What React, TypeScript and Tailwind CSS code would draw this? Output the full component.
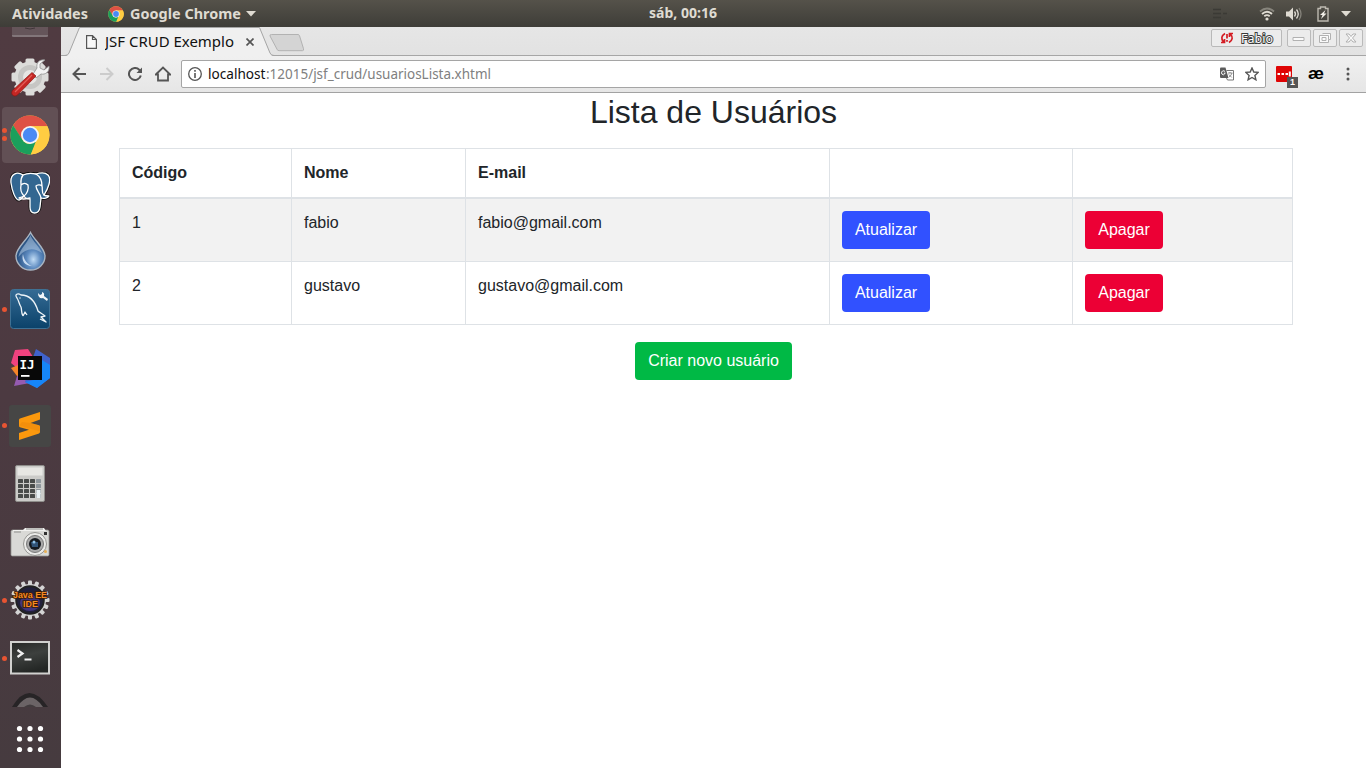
import React from "react";

const users = [
  { id: 1, name: "fabio", email: "fabio@gmail.com" },
  { id: 2, name: "gustavo", email: "gustavo@gmail.com" },
];

function ChromeIcon({ className }: { className: string }) {
  return (
    <svg viewBox="0 0 40 40" className={className}>
      <circle cx="20" cy="20" r="19.5" fill="#ffcd42" />
      <path d="M3.1 10.3A19.5 19.5 0 0 1 37.4 11.2H20L11.5 24Z" fill="#de5145" />
      <path d="M3.1 10.3L12.2 24.5Q15 29 20 29L26 26 20.8 39.5A19.5 19.5 0 0 1 3.1 10.3Z" fill="#1a9f5c" />
      <path d="M37.4 11.2H20v5l8.2 8.4L20.8 39.5A19.5 19.5 0 0 0 37.4 11.2Z" fill="#ffcd42" />
      <circle cx="20" cy="20" r="9" fill="#f4f4f4" />
      <circle cx="20" cy="20" r="7.2" fill="#4a8af4" />
    </svg>
  );
}

const gearTeeth = [0, 45, 90, 135, 180, 225, 270, 315];

function ToolsIcon() {
  return (
    <svg viewBox="0 0 40 40" className="size-10">
      <g fill="#dcdcda">
        {gearTeeth.map((a) => (
          <rect key={a} x="15.500" y="1.500" width="9" height="9" rx="1.5" transform={`rotate(${a} 20 20)`} />
        ))}
        <circle cx="20" cy="20" r="15.5" />
      </g>
      <circle cx="20" cy="20" r="12" fill="#c6c6c4" />
      <circle cx="20" cy="20" r="7" fill="#e6e6e4" />
      <path d="M23 17l4-6c-1-5 2-9 8-8l-5 4v4l4 2 5-4c1 6-4 9-8 8l-5 4z" fill="#f3f3f3" stroke="#8f8f8f" strokeWidth=".8" />
      <path d="M22 15.5l4 3.5L7.500 38C4 41 0 37 2.500 33.500Z" fill="#c52724" stroke="#8c1714" strokeWidth=".7" />
      <path d="M22 18L5 35" stroke="#e35d58" strokeWidth="1.2" />
    </svg>
  );
}

function PostgresIcon() {
  return (
    <svg viewBox="0 0 40 42" className="h-[42px] w-10" stroke="#fff" strokeLinejoin="round" strokeLinecap="round">
      <path d="M13 3C7-1 0 2 1 11c1 7 4 17 8 17 2 0 4-3 5-4 1 2 4 3 6 3v8c0 8 9 8 10 0l1-9c3 1 7 0 8-2-2 0-4 0-5-1 4-6 8-16 4-20-3-3-9-2-12-1-4-1-9-1-13 1Z" fill="#336791" stroke="#111" strokeWidth="3" />
      <path d="M13 3C7-1 0 2 1 11c1 7 4 17 8 17 2 0 4-3 5-4 1 2 4 3 6 3v8c0 8 9 8 10 0l1-9c3 1 7 0 8-2-2 0-4 0-5-1 4-6 8-16 4-20-3-3-9-2-12-1-4-1-9-1-13 1Z" fill="#336791" strokeWidth="1.3" />
      <path d="M13 3c-3 4-2 7-2 10-1 5 0 8 3 11 3-2 5-7 4-11-2-2-5-2-7 0M26 2c5 3 6 8 6 12-2-2-5-1-6 0 0 4 4 7 5 12M32 14c1 3-1 6 2 9M14 24c-2 2-4 1-5 2 3 2 7 1 11 0" fill="none" strokeWidth="1.3" />
    </svg>
  );
}

function DropIcon() {
  return (
    <svg viewBox="0 0 40 40" className="size-10">
      <defs>
        <radialGradient id="drop" cx=".6" cy=".72" r=".6">
          <stop offset="0" stopColor="#c1dcf5" />
          <stop offset=".4" stopColor="#5e8bc0" />
          <stop offset="1" stopColor="#1f4778" />
        </radialGradient>
      </defs>
      <path d="M20.500 1.500C17 9 6 17 6 25a14.500 14 0 0 0 29 0C35 17 24 9 20.500 1.500Z" fill="url(#drop)" stroke="#a9b5c2" strokeWidth="1.4" />
      <path d="M20.500 4C17 13 9 19 8.500 26 15 17 24 16 32 22 29 15 23 11 20.500 4Z" fill="#a8c1dc" opacity=".6" />
      <path d="M13 23c-2 7 2 12 9 12-5-2-8-6-9-12Z" fill="#e3f0ff" opacity=".8" />
    </svg>
  );
}

function WorkbenchIcon() {
  return (
    <svg viewBox="0 0 40 40" className="size-10">
      <defs>
        <linearGradient id="workbench" x1="0" y1="0" x2="0" y2="1">
          <stop offset="0" stopColor="#356b94" />
          <stop offset="1" stopColor="#0b426a" />
        </linearGradient>
      </defs>
      <rect x=".5" y=".5" width="39" height="39" rx="3" fill="url(#workbench)" stroke="#3f7194" />
      <path d="M13 27c-2-3-1-6-2-9-2-3-2-6-4-9-3-4 1-5 4-3 8 0 14 6 17 16 2 2 5 3 7 5l-4 1 5 5-6-3M13 27l2-4 2 3M9.500 9h1" fill="none" stroke="#eef4f8" strokeWidth="1.3" strokeLinejoin="round" />
      <path d="M28 4l2 2 2-1 0-2c3 1 2 3 2 4l4 3-1 2-4-3c-3 1-5-1-5-5Z" fill="#f2f5f8" />
    </svg>
  );
}

function IntelliJIcon() {
  return (
    <svg viewBox="0 0 40 40" className="size-10">
      <path d="M5 2l13-1 7 11-12 24-5-2 4-10-11-9Z" fill="#f0427e" />
      <path d="M1 20l12-5-1 16-5-3Z" fill="#f58529" />
      <path d="M7 28l12-4 1 11-16 3Z" fill="#955bb0" />
      <path d="M26 1l14 9v20l-13 10-12-6L22 12Z" fill="#3f62cc" />
      <path d="M32 12l8 5v13l-13 10-12-6 17-4Z" fill="#1686f8" />
      <rect x="8" y="8" width="24" height="24" fill="#080808" />
      <text x="9.500" y="20.5" fill="#fff" fontFamily="DejaVu Sans Mono, monospace" fontWeight="700" fontSize="12.500">IJ</text>
      <rect x="11" y="27" width="8.500" height="1.800" fill="#fff" />
    </svg>
  );
}

function SublimeIcon() {
  return (
    <svg viewBox="0 0 42 42" className="size-[42px]">
      <rect width="42" height="42" rx="3" fill="#464645" />
      <path d="M10 15Q10 14 11 13.600L31 7v7.500L21.500 18 30 20.300Q31 20.700 31 21.700V27Q31 28 30 28.400L10 35v-7l10-3.300-9-2.500Q10 22 10 21Z" fill="#fb980d" />
      <path d="M10 20.500l21 6Q31 20.700 30 20.300L21.500 18 13 17Z" fill="#e7850b" opacity=".45" />
    </svg>
  );
}

function CalculatorIcon() {
  return (
    <svg viewBox="0 0 30 37" className="h-[37px] w-[30px]">
      <rect x=".5" y=".5" width="29" height="36" rx="1.500" fill="#cbcbc8" stroke="#8f8e8b" />
      <rect x="2.500" y="2.500" width="25" height="8" fill="#e7e7e3" />
      {[14, 19, 24, 29].map((y) =>
        [3, 9, 15, 21].map((x) => (
          <rect key={`${x}-${y}`} x={x} y={y} width="5" height="4" rx=".6" fill={x === 21 ? "#8e969b" : "#494c4a"} />
        ))
      )}
      <rect x="21.500" y="25" width="4" height="8" fill="#e9f1f4" />
    </svg>
  );
}

function CameraIcon() {
  return (
    <svg viewBox="0 0 40 30" className="h-[30px] w-10">
      <rect x="1" y="3" width="38" height="26" rx="1.500" fill="#d9d9d6" stroke="#969592" strokeWidth=".8" />
      <path d="M3 3h10l2-2h19l2 3H3Z" fill="#f1f1ef" />
      <path d="M4 5h7M16 2h17" stroke="#8e8e8b" strokeWidth="1" />
      <circle cx="25" cy="17" r="11.500" fill="#ebebe9" stroke="#969693" />
      <circle cx="25" cy="17" r="8.500" fill="#aaa" stroke="#777" />
      <circle cx="25" cy="17" r="6" fill="#15191f" />
      <path d="M21 15h7v5h-6Z" fill="#315377" />
      <circle cx="24" cy="15" r="1.500" fill="#8fc1e7" />
      <rect x="34" y="5" width="3" height="3" fill="#313131" />
      <circle cx="35.500" cy="24.500" r="1.500" fill="#e9af52" />
    </svg>
  );
}

const cogTeeth = [0, 22.5, 45, 67.5, 90, 112.5, 135, 157.5, 180, 202.5, 225, 247.5, 270, 292.5, 315, 337.5];

function JavaIdeIcon() {
  return (
    <svg viewBox="0 0 40 40" className="size-10 overflow-visible">
      <g fill="#d4d4d4">
        {cogTeeth.map((a) => (
          <rect key={a} x="18" y=".5" width="4" height="7" rx="1" transform={`rotate(${a} 20 20)`} />
        ))}
        <circle cx="20" cy="20" r="16" />
      </g>
      <circle cx="20" cy="20" r="13.800" fill="#22203b" stroke="#222" strokeWidth="2" />
      <ellipse cx="20" cy="23" rx="10" ry="8" fill="#42367c" />
      <g fill="#f58a22" stroke="#3b1b05" strokeWidth="1.600" paintOrder="stroke" fontFamily="Liberation Sans, sans-serif" fontWeight="700" fontSize="9">
        <text x="3" y="18" textLength="34" lengthAdjust="spacingAndGlyphs">Java EE</text>
        <text x="13" y="26.500" textLength="15">IDE</text>
      </g>
    </svg>
  );
}

function TerminalIcon() {
  return (
    <svg viewBox="0 0 40 34" className="h-[34px] w-10">
      <defs>
        <linearGradient id="terminal" x1="0" y1="0" x2=".3" y2="1">
          <stop offset="0" stopColor="#252725" />
          <stop offset=".5" stopColor="#3d403e" />
          <stop offset="1" stopColor="#242725" />
        </linearGradient>
      </defs>
      <rect x="1" y="1" width="38" height="31.500" fill="url(#terminal)" stroke="#d1d1cf" strokeWidth="2" />
      <path d="M7.500 9l5 3.500-5 3.500M14.500 18.500h7" fill="none" stroke="#f1f1f1" strokeWidth="2.200" />
    </svg>
  );
}

const dockItems = [
  { id: "tools", icon: <ToolsIcon />, dots: 0 },
  { id: "chrome", icon: <ChromeIcon className="size-10" />, dots: 2 },
  { id: "postgres", icon: <PostgresIcon />, dots: 0 },
  { id: "drop", icon: <DropIcon />, dots: 0 },
  { id: "workbench", icon: <WorkbenchIcon />, dots: 1 },
  { id: "intellij", icon: <IntelliJIcon />, dots: 0 },
  { id: "sublime", icon: <SublimeIcon />, dots: 1 },
  { id: "calculator", icon: <CalculatorIcon />, dots: 0 },
  { id: "camera", icon: <CameraIcon />, dots: 0 },
  { id: "java", icon: <JavaIdeIcon />, dots: 1 },
  { id: "terminal", icon: <TerminalIcon />, dots: 1 },
];

function Dock() {
  return (
    <aside className="flex w-[61px] shrink-0 flex-col bg-[linear-gradient(#503b41,#4c3a41_50%,#463b3f)]">
      <div className="flex h-[20.500px] justify-center pr-0.5">
        <svg viewBox="0 0 36 11" className="h-[11px] w-9">
          <path d="M0 0h36v9q0 1-2 1H2q-2 0-2-1Z" fill="#65555a" />
          <path d="M0 8h36v1q0 1-2 1H2q-2 0-2-1Z" fill="#82767a" />
          <path d="M13 1q5 2 10 0" stroke="#41373a" fill="none" />
        </svg>
      </div>
      {dockItems.map((item) => (
        <div key={item.id} className="flex h-[58.2px] shrink-0 items-center pl-0.5">
          <div className={item.id === "chrome" ? "flex h-14 w-14 items-center rounded bg-[#625055]" : "flex h-14 w-14 items-center"}>
            <div className="flex w-[5px] shrink-0 flex-col gap-[3px]">
              {Array.from({ length: item.dots }, (_, i) => (
                <i key={i} className="size-[5px] rounded-full bg-[#e85432]" />
              ))}
            </div>
            <div className="flex flex-1 justify-center pr-[5px]">{item.icon}</div>
          </div>
        </div>
      ))}
      <div className="flex h-[37.500px] items-start justify-center pt-1 pr-0.5">
        <svg viewBox="0 0 38 16" className="h-4 w-[38px]">
          <path d="M1 15Q18-13 37 15Z" fill="#272426" />
          <path d="M6 15Q19-4 32 15Z" fill="#6b6466" />
          <path d="M13 15q6-5 12 0Z" fill="#423c3e" />
        </svg>
      </div>
      <div className="flex justify-center pr-0.5">
        <svg viewBox="0 0 28 28" className="size-7" fill="#fff">
          {[3.5, 14, 24.5].map((y) => [3.5, 14, 24.5].map((x) => <circle key={`${x}-${y}`} cx={x} cy={y} r="2.6" />))}
        </svg>
      </div>
    </aside>
  );
}

function SystemBar() {
  return (
    <header className="grid h-[27px] shrink-0 grid-cols-[1fr_auto_1fr] items-center bg-[linear-gradient(#55524a,#3e3d38)] font-['Noto_Sans',sans-serif] text-[14px] font-bold text-[#dfdbd2]">
      <div className="flex items-center pl-3">
        <svg width="77" height="20" fill="currentColor"><text x="0" y="15" textLength="76" lengthAdjust="spacingAndGlyphs">Atividades</text></svg>
        <ChromeIcon className="ml-[19px] size-4" />
        <svg width="113" height="20" className="ml-[6px]" fill="currentColor"><text x="0" y="15" textLength="111" lengthAdjust="spacingAndGlyphs">Google Chrome</text></svg>
        <svg viewBox="0 0 10 6" className="ml-[3px] h-[6px] w-[10px]"><path d="M0 0h10L5 5.500Z" fill="#dfdbd2" /></svg>
      </div>
      <svg width="69" height="20" fill="currentColor"><text x="0" y="14" textLength="68" lengthAdjust="spacingAndGlyphs">sáb, 00:16</text></svg>
      <div className="flex items-center justify-end pr-[15px]">
        <svg viewBox="0 0 15 12" className="mr-8 h-3 w-[15px]" stroke="#3b3a35" strokeWidth="1.500"><path d="M1 1.500h8M1 5.500h8M1 9.500h8M11 5.500h4" /></svg>
        <svg viewBox="0 0 16 14" className="h-[14px] w-4" fill="none" stroke="#dfdbd2" strokeWidth="1.800">
          <path d="M1 4.500Q8-1.500 15 4.500" opacity=".4" /><path d="M3 7Q8 2.500 13 7M5.300 9.300Q8 7 10.700 9.300" /><circle cx="8" cy="12" r="1.600" fill="#dfdbd2" stroke="none" />
        </svg>
        <svg viewBox="0 0 16 16" className="ml-[11px] size-4" fill="none" stroke="#dfdbd2" strokeWidth="1.300">
          <path d="M0 5.500h3l4-4v13l-4-4H0Z" fill="#dfdbd2" stroke="none" /><path d="M8.500 5.500q2 2.500 0 5M10.500 3.500q3.500 4.500 0 9" /><path d="M13 2q4 6 0 12" opacity=".4" />
        </svg>
        <svg viewBox="0 0 12 16" className="ml-[15px] h-4 w-3">
          <path d="M1 2.500h2.500V1h5v1.500H11V15H1Z" fill="none" stroke="#bdb9b0" strokeWidth="1.400" /><path d="M8.500 4L3 9h2.500L4 13l5.500-5.500H7Z" fill="#f2efe8" />
        </svg>
        <svg viewBox="0 0 10 6" className="ml-[12px] h-[6px] w-[10px]"><path d="M0 0h10L5 5.500Z" fill="#dfdbd2" /></svg>
      </div>
    </header>
  );
}

function TabStrip() {
  return (
    <div className="flex h-[29px] justify-between bg-[linear-gradient(#e6e6e6,#e2e2e2)] shadow-[inset_0_-1px_0_#a6a6a6]">
      <div className="relative flex w-[260px] items-center">
        <svg className="absolute inset-0 h-[29px] w-[260px]" viewBox="0 0 260 29">
          <path d="M5 29Q7 28.500 8 26L18.500 1H198.500L209 26q1 3 3 3Z" fill="#f0f0f0" />
          <path d="M0 28.500H4Q7 28.500 8 26L18.500 .5H198.500L209 26q1 2.500 4 2.500H260" fill="none" stroke="#a5a5a5" />
          <path d="M210.500 7.500H237q1 0 1.500 1.200l4 13q.5 2-1 2H218q-1.500 0-2-1.500L209 9q-.5-1.500 1.500-1.500Z" fill="#d4d4d4" stroke="#b2b2b2" />
        </svg>
        <svg viewBox="0 0 11 14" className="relative ml-[25px] h-[14px] w-[11px]" fill="#f8f8f8" stroke="#555" strokeWidth="1.200"><path d="M.6.6h5.900l3.900 3.900v8.900H.6ZM6.500.6v3.900h3.900" /></svg>
        <svg width="130" height="22" className="relative ml-2 font-['Noto_Sans',sans-serif] text-[14.500px]" fill="#111"><text x="0" y="16" textLength="129" lengthAdjust="spacingAndGlyphs">JSF CRUD Exemplo</text></svg>
        <svg viewBox="0 0 8 8" className="relative ml-[11px] size-2" stroke="#555" strokeWidth="1.700"><path d="M.5.5l7 7M7.500.5l-7 7" /></svg>
      </div>
      <div className="flex items-start gap-[5px] pt-[2px] pr-[3px]">
        <button className="flex h-[18px] w-[71px] items-center rounded-[2px] border border-[#b9b9b9] bg-[#ececec] pl-[8px]">
          <svg viewBox="0 0 14 12" className="h-3 w-[14px]" fill="none" stroke="#d41c23" strokeWidth="1.700"><path d="M5 1.500Q-.5 5 3.500 10M1 10.500h3.500V7M9 10.500Q14.500 7 10.500 2M13 1.500H9.500V5M7 2v4.500M7 8v1.700" /></svg>
          <svg width="36" height="16" className="ml-[6px] font-['Noto_Sans',sans-serif] text-[13px]"><text x="1" y="12.500" textLength="32" lengthAdjust="spacingAndGlyphs" fill="#fff" stroke="#3b3b3b" strokeWidth="2" paintOrder="stroke">Fabio</text></svg>
        </button>
        <div className="flex gap-[2px]">
          {["M6 8.500h11v3H6Z", "M9.500 4.500h8v6h-2M15.500 10.500v3h-9v-7h9ZM9 8.500h4v3H9Z", "M7 5h3l2 2.500L14 5h3l-3.500 4L17 13h-3l-2-2.500L10 13H7l3.500-4Z"].map((d, i) => (
            <button key={i} className="h-[18px] w-6 rounded-[2px] border border-[#bababa] bg-[#ececec]">
              <svg viewBox="1 1 22 16" className="h-4 w-[22px]" fill="#fafafa" stroke="#b1b1b1"><path d={d} /></svg>
            </button>
          ))}
        </div>
      </div>
    </div>
  );
}

function Toolbar() {
  return (
    <div className="flex h-[37px] items-center border-b border-[#a2a2a2] bg-[linear-gradient(#f0f0f0,#e6e6e6)] pl-[11px]">
      <svg viewBox="0 0 14 14" className="size-[14px]" fill="none" stroke="#555" strokeWidth="2"><path d="M14 7H2M7.500 1L1.500 7l6 6" /></svg>
      <svg viewBox="0 0 14 14" className="ml-[14px] size-[14px]" fill="none" stroke="#ccc" strokeWidth="2"><path d="M0 7H12M6.500 1l6 6-6 6" /></svg>
      <svg viewBox="0 0 14 14" className="ml-[14px] size-[14px]" fill="none" stroke="#555" strokeWidth="2"><path d="M12.800 8.500A6 6 0 1 1 11.200 2.700L13 4.500" /><path d="M14 .5V6H8.500Z" fill="#555" stroke="none" /></svg>
      <svg viewBox="0 0 16 16" className="ml-[13px] size-4" fill="none" stroke="#555" strokeWidth="1.800"><path d="M.8 8.500L8 1.500l7.200 7H13v6H3v-6Z" /></svg>
      <div className="ml-[10px] flex h-[28px] w-[1085px] items-center rounded-[2px] border border-[#a5a5a5] bg-white pl-[6px]">
        <svg viewBox="0 0 14 14" className="size-[14px]" fill="none" stroke="#555"><circle cx="7" cy="7" r="6.300" strokeWidth="1.300" /><path d="M7 6v5M7 3v1.700" strokeWidth="1.600" /></svg>
        <div className="ml-[6px] flex font-['Noto_Sans',sans-serif] text-[14px]">
          <svg width="58" height="24" fill="#111"><text x="0" y="17" textLength="57.500" lengthAdjust="spacingAndGlyphs">localhost</text></svg>
          <svg width="230" height="24" fill="#808080"><text x="0" y="17" textLength="225" lengthAdjust="spacingAndGlyphs">:12015/jsf_crud/usuariosLista.xhtml</text></svg>
        </div>
        <svg viewBox="0 0 14 14" className="ml-auto h-[14px] w-[14px]">
          <path d="M6.500 3.500h7v9.500h-6L6 10" fill="#fff" stroke="#777" /><path d="M0 1.500Q0 .5 1 .5H5.500L8.500 11H1Q0 11 0 10Z" fill="#5c5c5c" />
          <path d="M5 4.500Q4 3.300 2.500 4T1.800 7q1.500 2 3.500-.8H3.800" stroke="#fff" fill="none" /><path d="M8 6h4.500M10 5v1M12 6q-1 3-3 4M8.800 7.500l3 3" stroke="#777" fill="none" strokeWidth=".8" />
        </svg>
        <svg viewBox="0 0 14 14" className="mr-[6px] ml-[11px] size-[14px]" fill="none" stroke="#555" strokeWidth="1.400"><path d="M7 1l1.800 4 4.400.4-3.300 3 1 4.400L7 10.500l-3.900 2.300 1-4.400-3.300-3L5.200 5Z" /></svg>
      </div>
      <div className="relative ml-[10px] h-[22px] w-[22px]">
        <svg viewBox="0 0 22 22" className="size-[22px]"><rect y="3" width="16" height="16" rx="1" fill="#df0505" /><path d="M1.500 11H4M5.500 11H8M9.500 11H12M13.800 8.500v5" stroke="#fff" strokeWidth="2" /></svg>
        <span className="absolute top-[14px] left-[11px] h-[11px] w-[11px] bg-[#555] text-center font-['Liberation_Sans',sans-serif] text-[9px] leading-[11px] font-bold text-white">1</span>
      </div>
      <svg width="16" height="20" className="ml-[10px] font-['Liberation_Sans',sans-serif] text-[17px] font-bold"><text x="0" y="14.500" textLength="16" lengthAdjust="spacingAndGlyphs">æ</text></svg>
      <svg viewBox="0 0 4 14" className="ml-[22px] h-[14px] w-1" fill="#555"><circle cx="2" cy="2" r="1.500" /><circle cx="2" cy="7" r="1.500" /><circle cx="2" cy="12" r="1.500" /></svg>
    </div>
  );
}

const cell = "border-r border-[#dee2e6] px-3 pt-3 text-left align-top";

function UsersPage() {
  return (
    <main className="flex flex-1 flex-col bg-white font-['Liberation_Sans',Arial,sans-serif] text-base text-[#212529]">
      <h1 className="h-[55px] text-center text-[32px] leading-[38.4px]">Lista de Usuários</h1>
      <table className="ml-[58px] w-[1174px] table-fixed border-separate border-spacing-0 border-t border-l border-[#dee2e6]">
        <colgroup>
          <col className="w-[172px]" />
          <col className="w-[174px]" />
          <col className="w-[364px]" />
          <col className="w-[243px]" />
          <col className="w-[220px]" />
        </colgroup>
        <thead>
          <tr className="h-[50px]">
            {["Código", "Nome", "E-mail", "", ""].map((label, i) => (
              <th key={i} className={`${cell} border-b-2 font-bold`}>{label}</th>
            ))}
          </tr>
        </thead>
        <tbody>
          {users.map((u) => (
            <tr key={u.id} className="h-[63px] odd:bg-[#f2f2f2]">
              <td className={`${cell} border-b`}>{u.id}</td>
              <td className={`${cell} border-b`}>{u.name}</td>
              <td className={`${cell} border-b`}>{u.email}</td>
              <td className={`${cell} border-b`}>
                <button className="block h-[38px] w-[88px] rounded bg-[#3151ff] text-white">Atualizar</button>
              </td>
              <td className={`${cell} border-b`}>
                <button className="block h-[38px] w-[78px] rounded bg-[#ec0035] text-white">Apagar</button>
              </td>
            </tr>
          ))}
        </tbody>
      </table>
      <button className="mt-[17px] ml-[574px] h-[38px] w-[157px] rounded bg-[#00b945] text-white">Criar novo usuário</button>
    </main>
  );
}

export default function App() {
  return (
    <div className="flex h-[768px] w-[1366px] flex-col overflow-hidden">
      <SystemBar />
      <div className="flex min-h-0 flex-1">
        <Dock />
        <div className="flex min-w-0 flex-1 flex-col">
          <TabStrip />
          <Toolbar />
          <UsersPage />
        </div>
      </div>
    </div>
  );
}
